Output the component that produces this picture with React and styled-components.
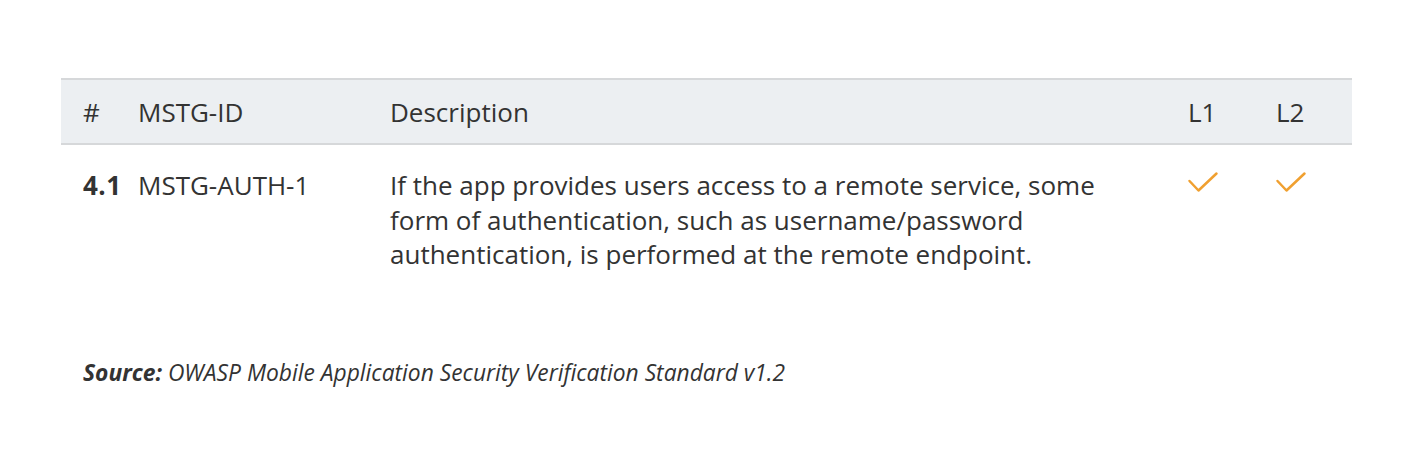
import React from "react";
import styled, { createGlobalStyle } from "styled-components";

const Global = createGlobalStyle`
  html, body { margin: 0; padding: 0; background: #fff; }
  body { font-family: "Open Sans", "Noto Sans", sans-serif; color: #333; }
`;

const Page = styled.div`
  width: 1428px;
  height: 475px;
  box-sizing: border-box;
  padding: 78px 76px 0 61px;
`;

const Table = styled.div`
  display: grid;
  grid-template-columns: 55px 252px 798px 88px 98px;
  width: 1291px;
`;

const HeadCell = styled.div`
  background: #eceff2;
  border-top: 2px solid #d6d8da;
  border-bottom: 2px solid #d6d8da;
  height: 63px;
  box-sizing: content-box;
  display: flex;
  align-items: center;
  padding-left: 22px;
  font-size: 26px;
  color: #333;
`;

const Cell = styled.div`
  padding: 23px 36px 0 22px;
  font-size: 26px;
  line-height: 34.5px;
  color: #333;
  font-weight: ${(p) => (p.$bold ? 700 : 400)};
  letter-spacing: ${(p) => (p.$bold ? "0.5px" : "normal")};
`;

const CheckCell = styled.div`
  padding: 26px 0 0 21px;
`;

const Source = styled.p`
  margin: 85px 0 0 22px;
  font-size: 22.8px;
  font-style: italic;
  color: #333;
  strong { font-weight: 700; }
`;

const Check = () => (
  <svg width="32" height="22" viewBox="0 0 32 22" fill="none">
    <path d="M2.5 10 L11.5 19.5 L29.5 2.5" stroke="#f0a030" strokeWidth="2.5" strokeLinecap="round" strokeLinejoin="round" />
  </svg>
);

export default function App() {
  return (
    <>
      <Global />
      <Page>
        <Table>
          <HeadCell>#</HeadCell>
          <HeadCell>MSTG-ID</HeadCell>
          <HeadCell>Description</HeadCell>
          <HeadCell>L1</HeadCell>
          <HeadCell>L2</HeadCell>
          <Cell $bold>4.1</Cell>
          <Cell>MSTG-AUTH-1</Cell>
          <Cell>
            If the app provides users access to a remote service, some form of authentication, such as username/password authentication, is performed at the remote endpoint.
          </Cell>
          <CheckCell><Check /></CheckCell>
          <CheckCell><Check /></CheckCell>
        </Table>
        <Source>
          <strong>Source:</strong> OWASP Mobile Application Security Verification Standard v1.2
        </Source>
      </Page>
    </>
  );
}
